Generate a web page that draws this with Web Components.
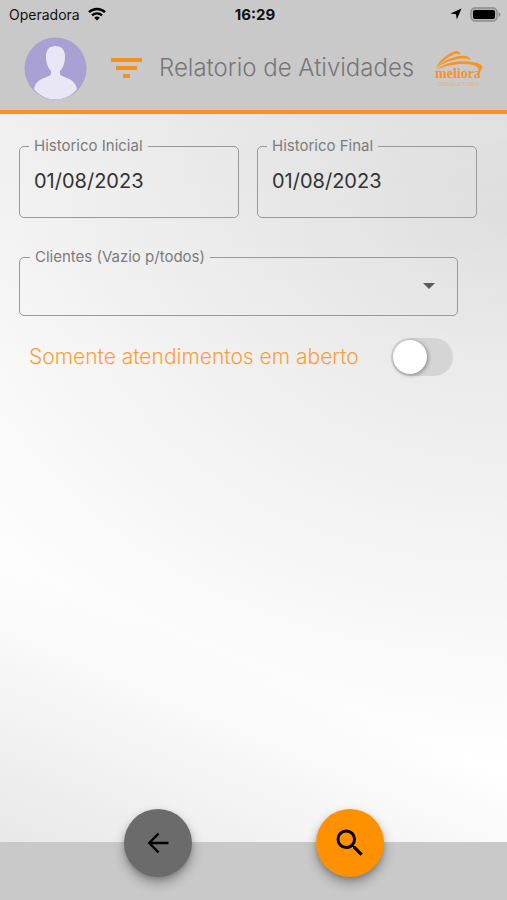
<!DOCTYPE html>
<html lang="pt-BR">
<head>
<meta charset="UTF-8">
<meta name="viewport" content="width=device-width, initial-scale=1">
<title>Relatorio de Atividades</title>
<style>
    body {
        margin: 0;
        font-family: Inter, "Liberation Sans", sans-serif;
        --laranja: #fb9220;
        --barra: #c9c9c9;
    }
</style>
</head>
<body>
<relatorio-page>
    <app-header slot="header" titulo="Relatorio de Atividades">
        <status-bar operadora="Operadora" hora="16:29"></status-bar>
    </app-header>
    <campo-data label="Historico Inicial" valor="01/08/2023"></campo-data>
    <campo-data label="Historico Final" valor="01/08/2023"></campo-data>
    <campo-select slot="cliente" label="Clientes (Vazio p/todos)"></campo-select>
    <toggle-switch slot="opcao">Somente atendimentos em aberto</toggle-switch>
    <barra-acoes slot="footer">
        <botao-redondo label="Voltar">
            <svg width="28" height="28" viewBox="0 0 24 24" fill="none" stroke="#000" stroke-width="2"><path d="M21 12H5M12.500 4 4.500 12l8 8"/></svg>
        </botao-redondo>
        <botao-redondo label="Pesquisar" cor="laranja">
            <svg width="36" height="36" viewBox="0 0 24 24"><path d="M15.500 14h-.79l-.28-.27A6.471 6.471 0 0 0 16 9.500 6.500 6.500 0 1 0 9.500 16c1.610 0 3.090-.59 4.230-1.570l.27.280v.79l5 4.990L20.490 19l-4.990-5zm-6 0C7.010 14 5 11.990 5 9.500S7.010 5 9.500 5 14 7.010 14 9.500 11.990 14 9.500 14z"/></svg>
        </botao-redondo>
    </barra-acoes>
</relatorio-page>

<script>
class StatusBar extends HTMLElement {
    constructor() {
        super();
        this.attachShadow({ mode: 'open' });
    }

    connectedCallback() {
        this.shadowRoot.innerHTML = `
            <style>
                :host {
                    display: grid;
                    grid-template-columns: 1fr auto 1fr;
                    align-items: center;
                    height: 28px;
                    padding: 0 6px 0 9px;
                    font-size: 14px;
                    color: #111;
                }
                div { display: flex; align-items: center; gap: 8px; }
                b { font-size: 15px; }
                .direita { justify-content: flex-end; }
            </style>
            <div>
                <span>${this.getAttribute('operadora')}</span>
                <svg width="18" height="14" viewBox="0 0 18 14" fill="none" stroke="#000" stroke-width="2.400">
                    <path d="M1 5.200a11.500 11.500 0 0 1 16 0M4 8.400a7.200 7.200 0 0 1 10 0"/>
                    <path d="M9 13.500 6.200 10.800a4 4 0 0 1 5.600 0z" fill="#000" stroke="none"/>
                </svg>
            </div>
            <b>${this.getAttribute('hora')}</b>
            <div class="direita">
                <svg width="12" height="12" viewBox="0 0 12 12"><path d="M11.500.500 6.800 11.500 6 6.200.500 5.600z"/></svg>
                <svg width="31" height="15" viewBox="0 0 31 15">
                    <rect x="1" y="1" width="26" height="13" rx="4" fill="#b5b5b5" stroke="#8c8c8c" stroke-width="1.300"/>
                    <rect x="3" y="3" width="22" height="9" rx="2"/>
                    <path d="M28.500 5v5q2-1 2-2.500T28.500 5" fill="#8c8c8c"/>
                </svg>
            </div>
        `;
    }
}

class AppHeader extends HTMLElement {
    constructor() {
        super();
        this.attachShadow({ mode: 'open' });
    }

    connectedCallback() {
        this.shadowRoot.innerHTML = `
            <style>
                :host {
                    display: block;
                    background: var(--barra);
                    border-bottom: 4px solid var(--laranja);
                }
                .linha {
                    display: flex;
                    align-items: center;
                    height: 80px;
                    padding: 0 24px 2px;
                }
                .avatar { margin-right: 24px; }
                button { border: 0; padding: 0; background: none; display: flex; }
                h1 {
                    flex: 1;
                    margin: 0 0 0 17px;
                    font-size: 24px;
                    line-height: 28px;
                    font-weight: 300;
                    color: #777;
                    white-space: nowrap;
                }
                svg { flex: none; }
            </style>
            <slot></slot>
            <div class="linha">
                <svg class="avatar" width="63" height="63" viewBox="0 0 63 63">
                    <clipPath id="circulo"><circle cx="31.500" cy="31.500" r="31"/></clipPath>
                    <circle cx="31.500" cy="31.500" r="31" fill="#a9a1d4"/>
                    <path d="M31.500 9c-6 0-9.500 4-9.500 10 0 7 2 12 5 15v3c-1 4-15 3-17 15C15 58 22 62.500 31.500 62.500S48 58 53 52c-2-12-16-11-17-15v-3c3-3 5-8 5-15 0-6-3.500-10-9.500-10z" fill="#e9e7f5" clip-path="url(#circulo)"/>
                </svg>
                <button aria-label="Filtrar">
                    <svg width="31" height="22" viewBox="0 0 31 22" fill="#f5901c">
                        <path d="M0 1h31v4H0zM5 9h21v4H5zM12 17h7v4h-7z"/>
                    </svg>
                </button>
                <h1>${this.getAttribute('titulo')}</h1>
                <svg width="50" height="40" viewBox="0 0 50 40" fill="#f79423">
                    <path d="M3 20C6 12 17 4 23 3q4 0 4.500 4Q25 5 22 6C15 9 8 14 3 20z"/>
                    <path d="M4 20C10 12 24 7 33 8q4 1 4.500 4-3-2-7-1.500C21 11 11 14 4 20z"/>
                    <path d="M3 22C14 13 30 12 42 14.500q10 2 6.500 7Q47 25 43.500 27q4-6 0-8.500C34 14 15 16 3 22z"/>
                    <text x="2" y="30" font-family="Liberation Serif, serif" font-size="14" font-weight="bold">meliora</text>
                    <text x="4" y="38" font-family="Liberation Sans, sans-serif" font-size="6" opacity="0.400">CONSULTORIA</text>
                </svg>
            </div>
        `;
    }
}

// borda e legenda comuns aos campos
const estiloCampo = `
    :host { display: block; }
    fieldset {
        box-sizing: border-box;
        min-width: 0;
        margin: 0;
        padding: 0 10px;
        border: 1px solid #999;
        border-radius: 5px;
    }
    legend {
        padding: 0 5px;
        font-size: 15px;
        line-height: 18px;
        color: #7c7c7c;
    }
    input, select {
        box-sizing: border-box;
        width: 100%;
        border: 0;
        margin: 0;
        background: none;
        font: inherit;
        outline: none;
    }
`;

class CampoData extends HTMLElement {
    constructor() {
        super();
        this.attachShadow({ mode: 'open' });
    }

    connectedCallback() {
        this.shadowRoot.innerHTML = `
            <style>
                ${estiloCampo}
                fieldset { height: 81px; padding-left: 9px; }
                input {
                    height: 32px;
                    margin-top: 10px;
                    padding: 0 5px;
                    font-size: 20px;
                    color: #333;
                }
            </style>
            <fieldset>
                <legend><label for="data">${this.getAttribute('label')}</label></legend>
                <input id="data" type="text" value="${this.getAttribute('valor')}">
            </fieldset>
        `;
    }
}

class CampoSelect extends HTMLElement {
    constructor() {
        super();
        this.attachShadow({ mode: 'open' });
    }

    connectedCallback() {
        this.shadowRoot.innerHTML = `
            <style>
                ${estiloCampo}
                fieldset { height: 68px; }
                .caixa {
                    display: grid;
                    grid-template-columns: 1fr 12px;
                    align-items: center;
                    height: 40px;
                    padding-right: 12px;
                }
                select { appearance: none; grid-area: 1 / 1 / 2 / 3; height: 38px; }
                svg { grid-area: 1 / 2; pointer-events: none; }
            </style>
            <fieldset>
                <legend><label for="clientes">${this.getAttribute('label')}</label></legend>
                <div class="caixa">
                    <select id="clientes"><option value=""></option></select>
                    <svg width="12" height="6" viewBox="0 0 12 6"><path d="M0 0h12L6 6z" fill="#5c5c5c"/></svg>
                </div>
            </fieldset>
        `;
    }
}

class ToggleSwitch extends HTMLElement {
    constructor() {
        super();
        this.attachShadow({ mode: 'open' });
    }

    connectedCallback() {
        this.shadowRoot.innerHTML = `
            <style>
                :host { display: block; }
                label {
                    display: flex;
                    align-items: center;
                    justify-content: space-between;
                    font-size: 21px;
                    line-height: 26px;
                    font-weight: 300;
                    color: #f8a040;
                    white-space: nowrap;
                }
                input {
                    appearance: none;
                    flex: none;
                    display: flex;
                    align-items: center;
                    box-sizing: border-box;
                    width: 62px;
                    height: 38px;
                    margin: 0;
                    padding: 0 2px;
                    border-radius: 19px;
                    background: #d5d5d5;
                }
                input::before {
                    content: "";
                    width: 34px;
                    height: 34px;
                    border-radius: 50%;
                    background: #fff;
                    box-shadow: 1px 1px 4px rgba(0, 0, 0, .4);
                }
                input:checked { justify-content: flex-end; background: var(--laranja); }
            </style>
            <label>
                <slot></slot>
                <input type="checkbox" role="switch">
            </label>
        `;
    }
}

class BotaoRedondo extends HTMLElement {
    constructor() {
        super();
        this.attachShadow({ mode: 'open' });
    }

    connectedCallback() {
        this.shadowRoot.innerHTML = `
            <style>
                :host { display: block; }
                button {
                    display: flex;
                    align-items: center;
                    justify-content: center;
                    width: 68px;
                    height: 68px;
                    padding: 0;
                    border: 0;
                    border-radius: 50%;
                    background: #6b6b6b;
                    box-shadow: 0 6px 12px rgba(0, 0, 0, .3), 0 2px 4px rgba(0, 0, 0, .15);
                }
                :host([cor="laranja"]) button { background: #ff9100; }
            </style>
            <button aria-label="${this.getAttribute('label')}"><slot></slot></button>
        `;
    }
}

class BarraAcoes extends HTMLElement {
    constructor() {
        super();
        this.attachShadow({ mode: 'open' });
    }

    connectedCallback() {
        this.shadowRoot.innerHTML = `
            <style>
                :host { display: block; height: 58px; background: var(--barra); }
                /* os botões ficam metade acima da barra */
                div { display: flex; justify-content: center; gap: 124px; }
                ::slotted(*) { margin-top: -33px; }
            </style>
            <div><slot></slot></div>
        `;
    }
}

class RelatorioPage extends HTMLElement {
    constructor() {
        super();
        this.attachShadow({ mode: 'open' });
    }

    connectedCallback() {
        this.shadowRoot.innerHTML = `
            <style>
                :host {
                    display: flex;
                    flex-direction: column;
                    min-height: 100vh;
                }
                main {
                    flex: 1;
                    padding: 23px 30px 0 19px;
                    background:
                        radial-gradient(140% 76% at 100% 14%, rgba(0, 0, 0, .11), transparent),
                        linear-gradient(rgba(0, 0, 0, .03), transparent 34%),
                        linear-gradient(203deg, #fff 70%, #e8e8e8 100%);
                }
                .datas {
                    display: grid;
                    grid-template-columns: 1fr 1fr;
                    gap: 18px;
                    margin-bottom: 30px;
                }
                .cliente { margin-right: 19px; }
                .opcao { margin: 22px 24px 0 10px; }
            </style>
            <slot name="header"></slot>
            <main>
                <div class="datas"><slot></slot></div>
                <div class="cliente"><slot name="cliente"></slot></div>
                <div class="opcao"><slot name="opcao"></slot></div>
            </main>
            <slot name="footer"></slot>
        `;
    }
}

customElements.define('status-bar', StatusBar);
customElements.define('app-header', AppHeader);
customElements.define('campo-data', CampoData);
customElements.define('campo-select', CampoSelect);
customElements.define('toggle-switch', ToggleSwitch);
customElements.define('botao-redondo', BotaoRedondo);
customElements.define('barra-acoes', BarraAcoes);
customElements.define('relatorio-page', RelatorioPage);
</script>
</body>
</html>
